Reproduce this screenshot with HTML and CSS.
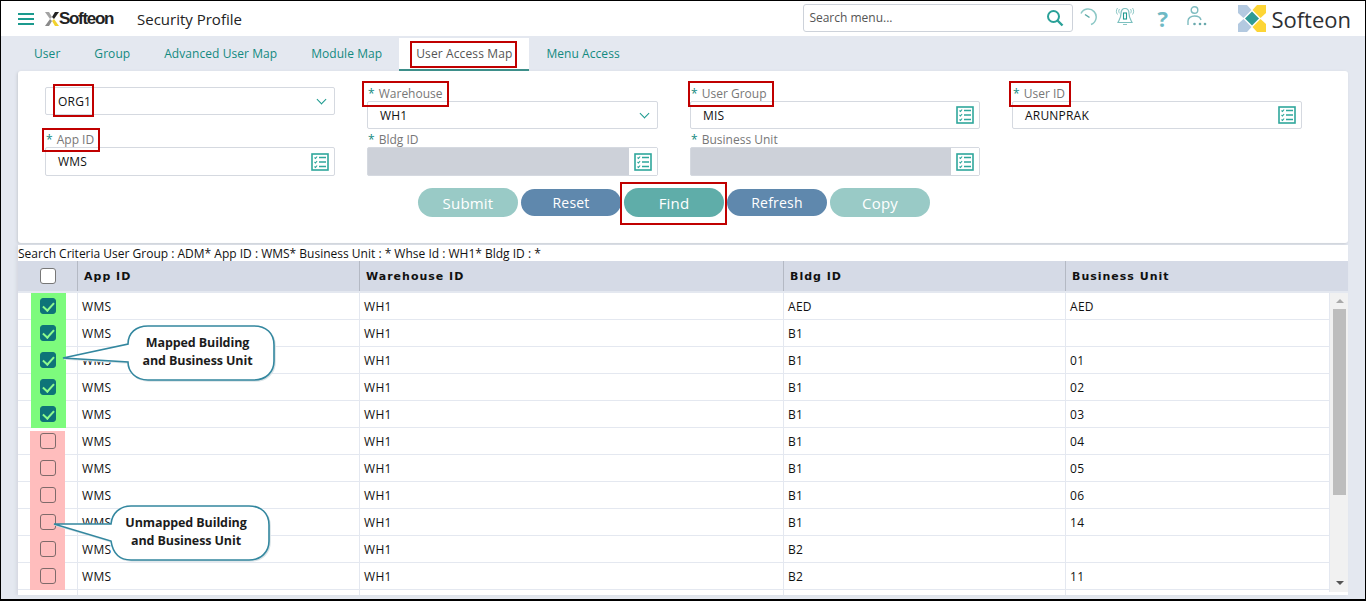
FILE: index.html
```html
<!DOCTYPE html>
<html lang="en">
<head>
    <meta charset="UTF-8">
    <meta name="viewport" content="width=device-width, initial-scale=1.0">
    <title>Security Profile</title>
    <link rel="stylesheet" href="styles.css">
</head>

<body>
<svg class="defs" width="0" height="0">
    <symbol id="listIcon" viewBox="0 0 18 18">
        <rect x="1" y="1" width="16" height="16" fill="#fff" stroke="#2fa79c" stroke-width="1.6"/>
        <path d="M3.500 4.500l1 1 1.600-2M3.500 9l1 1 1.600-2M3.500 13.500l1 1 1.600-2" fill="none" stroke="#2fa79c" stroke-width="1.100"/>
        <path d="M8 4.500h7M8 9h7M8 13.500h7" stroke="#2fa79c" stroke-width="1.600"/>
    </symbol>
</svg>

<header class="topbar">
    <div class="hamburger"><span></span><span></span><span></span></div>
    <div class="small-logo">
        <svg width="14" height="16" viewBox="0 0 14 16">
            <path d="M0 1h4l3 5-2 2z" fill="#a3a3a3"/>
            <path d="M14 1h-4L7 6l2 2z" fill="#222"/>
            <path d="M0 15h4l3-5-2-2z" fill="#8a8a8a"/>
            <path d="M14 15h-4l-3-5 2-2z" fill="#f2d22e"/>
        </svg>
        <span>Softeon</span>
    </div>
    <div class="page-title">Security Profile</div>
    <div class="topbar-right">
        <div class="menu-search">
            <span>Search menu...</span>
            <svg width="18" height="18" viewBox="0 0 18 18"><circle cx="7.500" cy="7.500" r="5.500" fill="none" stroke="#2aa198" stroke-width="2"/><path d="M11.500 11.500l5 5" stroke="#2aa198" stroke-width="2.400"/></svg>
        </div>
        <svg class="top-icon icon-history" width="18" height="18" viewBox="0 0 18 18"><path d="M1 5.500A8 8 0 1 1 11 16.500" fill="none" stroke="#8cc8c6" stroke-width="1.500"/><path d="M9.500 9.500L5 6.500" stroke="#5aa9a6" stroke-width="1.500"/></svg>
        <svg class="top-icon icon-bell" width="20" height="20" viewBox="0 0 20 20"><path d="M10 2.500c-2.500 0-4 2-4 5 0 4-1.500 6-3 9h14c-1.500-3-3-5-3-9 0-3-1.500-5-4-5z" fill="none" stroke="#7cc0bf" stroke-width="1.200"/><rect x="8.500" y="7" width="3" height="6" fill="none" stroke="#1f9a90" stroke-width="1.100"/><path d="M2.500 2C1 4 1 6.500 2.500 8.500M17.500 2c1.500 2 1.500 4.500 0 6.500M4.500 3c-1 1.300-1 3 0 4.300M15.500 3c1 1.300 1 3 0 4.300M8 18.500h4" fill="none" stroke="#8cc8c6" stroke-width="1"/></svg>
        <span class="help">?</span>
        <svg class="top-icon icon-user" width="20" height="20" viewBox="0 0 20 20"><circle cx="7.500" cy="4" r="3.300" fill="none" stroke="#7fbcc0" stroke-width="1.400"/><path d="M1 19v-4c0-3 3-5 6.500-5s6 1.500 6.500 4" fill="none" stroke="#7fbcc0" stroke-width="1.400"/><circle cx="7.500" cy="18" r="1.300" fill="#6aa9ad"/><circle cx="13" cy="18" r="1.300" fill="#6aa9ad"/><circle cx="18" cy="18" r="1.300" fill="#6aa9ad"/></svg>
        <div class="big-logo">
            <svg width="28" height="27" viewBox="0 0 28 27">
                <path d="M0 0h9l4.500 5-8 8L0 8z" fill="#b3c9e0"/>
                <path d="M28 0h-9l-4.500 5 8 8 5.500-5z" fill="#fdd535"/>
                <path d="M0 27h9l4.500-5-8-8L0 19z" fill="#b3c9e0"/>
                <path d="M28 27h-9l-4.500-5 8-8 5.500 5z" fill="#fdd535"/>
                <path d="M14 6.500l7 7-7 7-7-7z" fill="#2f9a94"/>
            </svg>
            <span>Softeon</span>
        </div>
    </div>
</header>

<nav class="tabs">
    <a>User</a>
    <a>Group</a>
    <a>Advanced User Map</a>
    <a>Module Map</a>
    <a class="active">User Access Map</a>
    <a>Menu Access</a>
</nav>

<section class="panel">
    <div class="fields">
        <div class="field-col">
            <div class="input-box select-box first-select"><span>ORG1</span><i class="chevron"></i></div>
            <label class="second"><b>*</b> App ID</label>
            <div class="input-box tall"><span>WMS</span><svg class="list-icon"><use href="#listIcon"/></svg></div>
        </div>
        <div class="field-col">
            <label><b>*</b> Warehouse</label>
            <div class="input-box select-box"><span>WH1</span><i class="chevron"></i></div>
            <label class="second"><b>*</b> Bldg ID</label>
            <div class="input-box tall disabled"><span></span><div class="icon-cell"><svg class="list-icon"><use href="#listIcon"/></svg></div></div>
        </div>
        <div class="field-col">
            <label><b>*</b> User Group</label>
            <div class="input-box"><span>MIS</span><svg class="list-icon"><use href="#listIcon"/></svg></div>
            <label class="second"><b>*</b> Business Unit</label>
            <div class="input-box tall disabled"><span></span><div class="icon-cell"><svg class="list-icon"><use href="#listIcon"/></svg></div></div>
        </div>
        <div class="field-col">
            <label><b>*</b> User ID</label>
            <div class="input-box"><span>ARUNPRAK</span><svg class="list-icon"><use href="#listIcon"/></svg></div>
        </div>
    </div>
    <div class="buttons">
        <button class="btn-faded">Submit</button>
        <button class="btn-blue">Reset</button>
        <button class="btn-teal">Find</button>
        <button class="btn-blue">Refresh</button>
        <button class="btn-faded">Copy</button>
    </div>
</section>

<section class="results">
    <div class="criteria">Search Criteria User Group : ADM* App ID : WMS* Business Unit : * Whse Id : WH1* Bldg ID : *</div>
    <div class="grid-head">
        <div class="check-col"><span class="box"></span></div>
        <div class="c-app">App ID</div>
        <div class="c-wh">Warehouse ID</div>
        <div class="c-bldg">Bldg ID</div>
        <div class="c-bu">Business Unit</div>
    </div>
    <div class="grid-wrap">
        <div class="grid-body">
            <div class="row"><div class="check-col mapped"><span class="box on"></span></div><div class="c-app">WMS</div><div class="c-wh">WH1</div><div class="c-bldg">AED</div><div class="c-bu">AED</div></div>
            <div class="row"><div class="check-col mapped"><span class="box on"></span></div><div class="c-app">WMS</div><div class="c-wh">WH1</div><div class="c-bldg">B1</div><div class="c-bu"></div></div>
            <div class="row"><div class="check-col mapped"><span class="box on"></span></div><div class="c-app">WMS</div><div class="c-wh">WH1</div><div class="c-bldg">B1</div><div class="c-bu">01</div></div>
            <div class="row"><div class="check-col mapped"><span class="box on"></span></div><div class="c-app">WMS</div><div class="c-wh">WH1</div><div class="c-bldg">B1</div><div class="c-bu">02</div></div>
            <div class="row"><div class="check-col mapped"><span class="box on"></span></div><div class="c-app">WMS</div><div class="c-wh">WH1</div><div class="c-bldg">B1</div><div class="c-bu">03</div></div>
            <div class="row"><div class="check-col unmapped"><span class="box"></span></div><div class="c-app">WMS</div><div class="c-wh">WH1</div><div class="c-bldg">B1</div><div class="c-bu">04</div></div>
            <div class="row"><div class="check-col unmapped"><span class="box"></span></div><div class="c-app">WMS</div><div class="c-wh">WH1</div><div class="c-bldg">B1</div><div class="c-bu">05</div></div>
            <div class="row"><div class="check-col unmapped"><span class="box"></span></div><div class="c-app">WMS</div><div class="c-wh">WH1</div><div class="c-bldg">B1</div><div class="c-bu">06</div></div>
            <div class="row"><div class="check-col unmapped"><span class="box"></span></div><div class="c-app">WMS</div><div class="c-wh">WH1</div><div class="c-bldg">B1</div><div class="c-bu">14</div></div>
            <div class="row"><div class="check-col unmapped"><span class="box"></span></div><div class="c-app">WMS</div><div class="c-wh">WH1</div><div class="c-bldg">B2</div><div class="c-bu"></div></div>
            <div class="row"><div class="check-col unmapped"><span class="box"></span></div><div class="c-app">WMS</div><div class="c-wh">WH1</div><div class="c-bldg">B2</div><div class="c-bu">11</div></div>
            <div class="row"><div class="check-col"></div><div class="c-app"></div><div class="c-wh"></div><div class="c-bldg"></div><div class="c-bu"></div></div>
        </div>
        <div class="scrollbar">
            <i class="arrow-up"></i>
            <div class="thumb"></div>
            <i class="arrow-down"></i>
        </div>
    </div>
</section>

<!-- red highlight boxes added on top of the screenshot -->
<div class="mark mark-tab"></div>
<div class="mark mark-org"></div>
<div class="mark mark-wh"></div>
<div class="mark mark-group"></div>
<div class="mark mark-user"></div>
<div class="mark mark-app"></div>
<div class="mark mark-find"></div>

<!-- callouts -->
<div class="callout callout-mapped">
    <svg width="216" height="58" viewBox="0 0 216 58">
        <path d="M1 33L66 19C66 8 74 1 86 1H192C204 1 212 8 212 20V36C212 47 204 55 192 55H86C74 55 66 47 66 37z" fill="#fff" stroke="#33879f" stroke-width="1.600"/>
    </svg>
    <p>Mapped Building<br>and Business Unit</p>
</div>
<div class="callout callout-unmapped">
    <svg width="220" height="58" viewBox="0 0 220 58">
        <path d="M1 19L58 19C59 8 67 1 78 1H196C208 1 216 8 216 20V36C216 47 208 55 196 55H78C67 55 60 49 58 36z" fill="#fff" stroke="#33879f" stroke-width="1.600"/>
    </svg>
    <p>Unmapped Building<br>and Business Unit</p>
</div>
</body>
</html>
```

FILE: styles.css
```css
* {
    box-sizing: border-box;
}

html, body {
    margin: 0;
    height: 601px;
    overflow: hidden;
}

body {
    position: relative;
    background-color: #e4e8f0;
    border: 1px solid #000;
    border-bottom-width: 2px;
    font-family: "Open Sans", "Noto Sans", sans-serif;
    font-size: 12px;
    color: #111;
}

.defs {
    position: absolute;
}

/* top bar */
.topbar {
    display: flex;
    align-items: center;
    height: 35px;
    background-color: #fff;
    padding-left: 17px;
}

.hamburger {
    display: flex;
    flex-direction: column;
    gap: 3px;
    width: 16px;
}

.hamburger span {
    height: 2px;
    background-color: #1b9a8e;
}

.small-logo {
    display: flex;
    align-items: center;
    margin-left: 11px;
    width: 92px;
}

.small-logo span {
    font-family: "Liberation Sans", sans-serif;
    font-weight: bold;
    font-size: 17px;
    letter-spacing: -1.300px;
    color: #222;
}

.page-title {
    font-size: 15px;
    color: #222;
}

.topbar-right {
    display: flex;
    align-items: center;
    margin-left: auto;
}

.menu-search {
    display: flex;
    align-items: center;
    justify-content: space-between;
    width: 270px;
    height: 28px;
    padding: 0 8px 0 5px;
    margin-bottom: 2px;
    border: 1px solid #cdd2da;
    border-radius: 3px;
    color: #555;
}

.top-icon {
    flex: none;
}

.icon-history {
    margin: 0 0 3px 7px;
}

.icon-bell {
    margin: 0 0 5px 17px;
}

.help {
    width: 12px;
    margin: 0 18px 2px 22px;
    font-size: 22px;
    font-weight: bold;
    line-height: 1;
    color: #6fb9c4;
}

.icon-user {
    margin-bottom: 5px;
}

.big-logo {
    display: flex;
    align-items: center;
    gap: 5px;
    margin-left: 31px;
    margin-right: 14px;
}

.big-logo span {
    font-size: 22px;
    line-height: 1;
    color: #2d2f33;
}

/* tabs */
.tabs {
    display: flex;
    height: 35px;
    padding: 2px 0 0 16px;
}

.tabs a {
    padding: 7px 17px 0;
    font-size: 12px;
    letter-spacing: 0.06px;
    color: #138a80;
}

.tabs a.active {
    background-color: #fff;
    border-bottom: 2px solid #3d8f8a;
    letter-spacing: 0.12px;
    color: #555;
}

/* form panel */
.panel {
    height: 172px;
    margin: 0 17px;
    padding: 16px 27px 0;
    background-color: #fff;
    border-radius: 3px;
    box-shadow: -1px 1px 3px #c8ccd2;
}

.fields {
    display: grid;
    grid-template-columns: 290px 291px 290px 290px;
    column-gap: 32px;
}

.field-col {
    display: flex;
    flex-direction: column;
    height: 89px;
}

.field-col label {
    height: 14px;
    padding-left: 1px;
    line-height: 14px;
    color: #777;
}

.field-col label b {
    margin-right: 1px;
    font-weight: normal;
    color: #138a80;
}

.field-col label.second {
    margin-top: 4px;
}

.first-select {
    margin-bottom: 14px;
}

.input-box {
    display: flex;
    align-items: center;
    justify-content: space-between;
    flex: none;
    height: 28px;
    padding: 0 5px 0 12px;
    border: 1px solid #d5d9e0;
    border-radius: 2px;
    letter-spacing: 0.2px;
}

.input-box.tall {
    height: 29px;
}

.list-icon {
    width: 18px;
    height: 18px;
}

.chevron {
    width: 7px;
    height: 7px;
    margin: -3px 4px 0 0;
    border-right: 1.500px solid #1b9a8e;
    border-bottom: 1.500px solid #1b9a8e;
    transform: rotate(45deg);
}

.input-box.disabled {
    padding: 0;
    background-color: #cdd1d9;
}

.icon-cell {
    display: flex;
    align-items: center;
    justify-content: center;
    width: 28px;
    height: 100%;
    background-color: #fff;
}

.buttons {
    display: flex;
    justify-content: center;
    gap: 3px;
    margin: 12px 18px 0 0;
}

.buttons button {
    width: 100px;
    height: 29px;
    border: 0;
    border-radius: 15px;
    font-family: inherit;
    font-size: 15px;
    letter-spacing: 0.2px;
    color: #fff;
}

.btn-faded {
    background-color: #99cac6;
}

.btn-teal {
    background-color: #5fada9;
}

.buttons .btn-blue {
    height: 27px;
    margin-top: 1px;
    font-size: 14px;
    background-color: #5f88ad;
}

/* results grid */
.results {
    margin: 2px 17px 0;
    box-shadow: -2px 0 3px #d5d9e2;
}

.criteria {
    height: 16px;
    padding-top: 2px;
    line-height: 14px;
    background-color: #fff;
    white-space: nowrap;
}

.grid-head,
.row {
    display: grid;
    grid-template-columns: 59px 282px 424px 282px 1fr;
}

.grid-head {
    height: 32px;
    background-color: #d5dae6;
    border-bottom: 2px solid #e4e8f0;
    font-family: "DejaVu Sans", sans-serif;
    font-size: 11px;
    font-weight: bold;
    letter-spacing: 1px;
}

.grid-head > div {
    display: flex;
    align-items: center;
    padding-left: 6px;
    border-left: 1px solid #b4b9c4;
}

.grid-head > .check-col {
    border-left: 0;
}

.grid-wrap {
    display: flex;
    height: 302px;
    overflow: hidden;
    background-color: #fff;
}

.grid-body {
    width: 1311px;
}

.row {
    height: 27px;
    border-bottom: 1px solid #e4e8f0;
}

.row > div {
    display: flex;
    align-items: center;
    padding-left: 4px;
    border-left: 1px solid #e4e8f0;
    letter-spacing: 0.3px;
}

.row > .check-col {
    border-left: 0;
}

.grid-head > .check-col {
    padding-left: 22px;
}

.row > .mapped {
    margin: 0 11px -1px 13px;
    padding-left: 9px;
    background-color: #7dfb7d;
}

.row > .unmapped {
    margin: 0 12px -1px 12px;
    padding-left: 10px;
    background-color: #ffbdbd;
}

.row:nth-child(6) > .unmapped {
    margin-top: 3px;
}

.box {
    display: block;
    width: 16px;
    height: 16px;
    border: 1px solid #7f6a6a;
    border-radius: 3px;
}

.row .box {
    margin-bottom: 2px;
}

.row:nth-child(6) .box {
    margin-bottom: 5px;
}

.grid-head .box {
    background-color: #fff;
    border-color: #777;
}

.box.on {
    position: relative;
    background-color: #0e7478;
    border-color: #0e7478;
}

.box.on::after {
    content: "";
    position: absolute;
    left: 4px;
    top: 1px;
    width: 5px;
    height: 9px;
    border-right: 2.500px solid #8dfb8d;
    border-bottom: 2.500px solid #8dfb8d;
    transform: rotate(42deg);
}

.scrollbar {
    position: relative;
    flex: 1;
    background-color: #f1f1f1;
    border-left: 1px solid #e4e8f0;
    margin-bottom: 3px;
}

.thumb {
    position: absolute;
    left: 3px;
    right: 2px;
    top: 16px;
    height: 186px;
    background-color: #bdbdbd;
}

.arrow-up,
.arrow-down {
    position: absolute;
    left: 6px;
    width: 0;
    height: 0;
    border-left: 4px solid transparent;
    border-right: 4px solid transparent;
}

.arrow-up {
    top: 6px;
    border-bottom: 4px solid #a9a9a9;
}

.arrow-down {
    bottom: 7px;
    border-top: 4px solid #555;
}

/* annotations */
.mark {
    position: absolute;
    border: 2px solid #c00000;
}

.mark-tab { left: 409px; top: 40px; width: 107px; height: 27px; }
.mark-org { left: 52px; top: 83px; width: 41px; height: 33px; }
.mark-wh { left: 361px; top: 80px; width: 87px; height: 26px; }
.mark-group { left: 687px; top: 80px; width: 86px; height: 26px; }
.mark-user { left: 1008px; top: 80px; width: 62px; height: 26px; }
.mark-app { left: 41px; top: 127px; width: 58px; height: 24px; }
.mark-find { left: 619px; top: 181px; width: 107px; height: 43px; }

.callout {
    position: absolute;
    width: 220px;
    height: 58px;
}

.callout svg {
    display: block;
    filter: drop-shadow(1px 1px 0 #d8e2e6);
}

.callout p {
    position: absolute;
    top: 9px;
    margin: 0;
    font-family: "Open Sans", sans-serif;
    font-size: 12.500px;
    font-weight: bold;
    letter-spacing: -0.100px;
    line-height: 18px;
    text-align: center;
    color: #1c1c1c;
}

.callout-mapped { left: 61px; top: 324px; }
.callout-mapped p { left: 65px; width: 141px; }
.callout-unmapped { left: 52px; top: 504px; }
.callout-unmapped p { left: 57px; width: 152px; }
```
